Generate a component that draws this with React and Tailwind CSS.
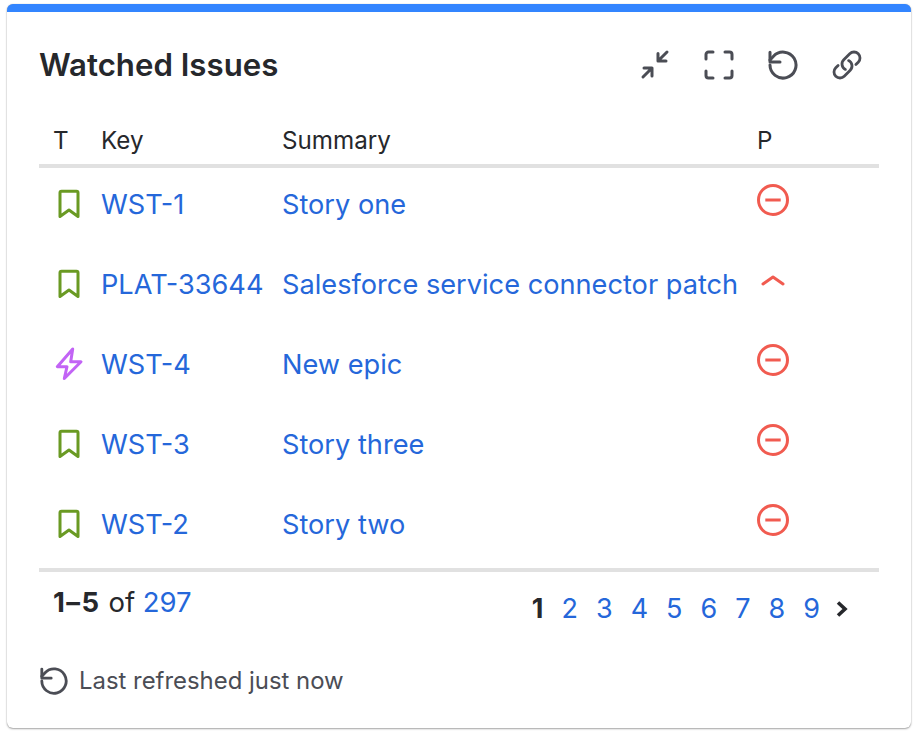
import React from "react";

const Bookmark = () => (
  <svg width="28" height="32" viewBox="0 0 28 32" fill="none" stroke="#6a9a23" strokeWidth="3" strokeLinejoin="round">
    <path d="M6 4.800a1.500 1.500 0 0 1 1.500-1.500h15a1.500 1.500 0 0 1 1.500 1.500v23.700l-9-6.500-9 6.500z" />
  </svg>
);
const Bolt = () => (
  <svg width="30" height="34" viewBox="0 0 30 34" fill="none" stroke="#c264f5" strokeWidth="3" strokeLinejoin="round">
    <path d="M18.700 2 3.300 19.700H13L10.300 31.500 27 14.700H16.700z" />
  </svg>
);
const Blocker = () => (
  <svg className="mb-[8px]" width="34" height="34" viewBox="0 0 34 34" fill="none" stroke="#f15b50" strokeWidth="3">
    <circle cx="17" cy="17" r="14.500" />
    <path d="M9.300 17h15.400" />
  </svg>
);
const Up = () => (
  <svg className="mb-[9px]" width="28" height="16" viewBox="0 0 28 16" fill="none" stroke="#f15b50" strokeWidth="3" strokeLinecap="round" strokeLinejoin="round">
    <path d="M4 12l10-7 10 7" />
  </svg>
);
const Restore = ({ size = 32 }) => (
  <svg width={size} height={size} viewBox="0 0 32 32" fill="none" stroke="#4b4d55" strokeWidth="3" strokeLinecap="round" strokeLinejoin="round">
    <path d="M3 16a13 13 0 1 0 3.500-8.800L3 11" />
    <path d="M3 3.300V13h10" />
  </svg>
);
const Collapse = () => (
  <svg width="32" height="32" viewBox="0 0 32 32" fill="none" stroke="#4b4d55" strokeWidth="3" strokeLinecap="round" strokeLinejoin="round">
    <path d="m28 3-9 9M19 4.500V12h8" />
    <path d="m4 28 9-9M5 19h8v8" />
  </svg>
);
const Expand = () => (
  <svg width="32" height="32" viewBox="0 0 32 32" fill="none" stroke="#4b4d55" strokeWidth="3" strokeLinecap="round" strokeLinejoin="round">
    <path d="M10 3H5.500A2.500 2.500 0 0 0 3 5.500V10M22 3h4.500A2.500 2.500 0 0 1 29 5.500V10M10 29H5.500A2.500 2.500 0 0 1 3 26.500V22M22 29h4.500a2.500 2.500 0 0 0 2.500-2.500V22" />
  </svg>
);
const LinkIcon = () => (
  <svg width="32" height="32" viewBox="0 0 24 24" fill="none" stroke="#4b4d55" strokeWidth="2.100" strokeLinecap="round" strokeLinejoin="round">
    <path d="M13.190 8.688a4.500 4.500 0 0 1 1.242 7.244l-4.500 4.500a4.500 4.500 0 0 1-6.364-6.364l1.757-1.757m13.350-.622 1.757-1.757a4.500 4.500 0 0 0-6.364-6.364l-4.500 4.500a4.500 4.500 0 0 0 1.242 7.244" />
  </svg>
);
const Next = () => (
  <svg width="14" height="18" viewBox="0 0 14 18" fill="none" stroke="#26282c" strokeWidth="3.600">
    <path d="m3 2.500 7 6.500-7 6.500" />
  </svg>
);

const rows = [
  { key: "WST-1", summary: "Story one", type: <Bookmark />, pr: <Blocker /> },
  { key: "PLAT-33644", summary: "Salesforce service connector patch", type: <Bookmark />, pr: <Up /> },
  { key: "WST-4", summary: "New epic", type: <Bolt />, pr: <Blocker /> },
  { key: "WST-3", summary: "Story three", type: <Bookmark />, pr: <Blocker /> },
  { key: "WST-2", summary: "Story two", type: <Bookmark />, pr: <Blocker /> },
];

export default function App() {
  return (
    <div className="w-[924px] h-[734px] bg-white pl-[7px] pt-[4px] font-['Inter',sans-serif]">
      <div className="w-[904px] h-[724px] bg-white rounded-[6px] border-t-8 border-[#3385ff] shadow-[0_1px_2px_rgba(0,0,0,0.35),0_0_1px_rgba(0,0,0,0.25)] px-[32px]">
        <div className="flex items-center justify-between h-[105px]">
          <h1 className="pt-[2px] text-[31.200px] font-semibold text-[#26282c] leading-none">Watched Issues</h1>
          <div className="flex items-center gap-[32px] pr-[16px]">
            <Collapse />
            <Expand />
            <Restore />
            <LinkIcon />
          </div>
        </div>
        <div className="h-[51px] pt-[2px] flex items-center border-b-4 border-[#e1e1e1] text-[24.200px] text-[#26282c]">
          <div className="w-[62px] pl-[14px]">T</div>
          <div className="w-[181px]">Key</div>
          <div className="w-[475px]">Summary</div>
          <div>P</div>
        </div>
        <div className="mt-[-4px]">
          {rows.map((r) => (
            <div key={r.key} className="h-[80px] flex items-center text-[27.200px] text-[#2567da]">
              <div className="w-[62px] pl-[15px] flex items-center">{r.type}</div>
              <div className="w-[181px] pt-[2px]">{r.key}</div>
              <div className="w-[475px] pt-[2px] whitespace-nowrap">{r.summary}</div>
              <div className="w-[34px] ml-[-1px] flex justify-center items-center">{r.pr}</div>
            </div>
          ))}
        </div>
        <div className="h-[4px] mt-[4px] bg-[#e1e1e1]" />
        <div className="flex justify-between items-start pl-[14px] pr-[30px] pt-[12px] h-[70px]">
          <div className="text-[27.500px] text-[#26282c] leading-[36px]">
            <span className="font-bold tracking-[1.500px]">1–5</span> of <span className="text-[#2567da]">297</span>
          </div>
          <div className="flex items-center gap-[18px] text-[27px] leading-[36px] text-[#2567da] pt-[7px]">
            <span className="font-bold text-[#26282c]">1</span>
            {["2", "3", "4", "5", "6", "7", "8", "9"].map((n) => (
              <span key={n}>{n}</span>
            ))}
            <span className="ml-[-3px]"><Next /></span>
          </div>
        </div>
        <div className="flex items-center gap-[10px] mt-[21px] text-[23.900px] text-[#4b4d55]">
          <Restore size={30} />
          <span>Last refreshed just now</span>
        </div>
      </div>
    </div>
  );
}
